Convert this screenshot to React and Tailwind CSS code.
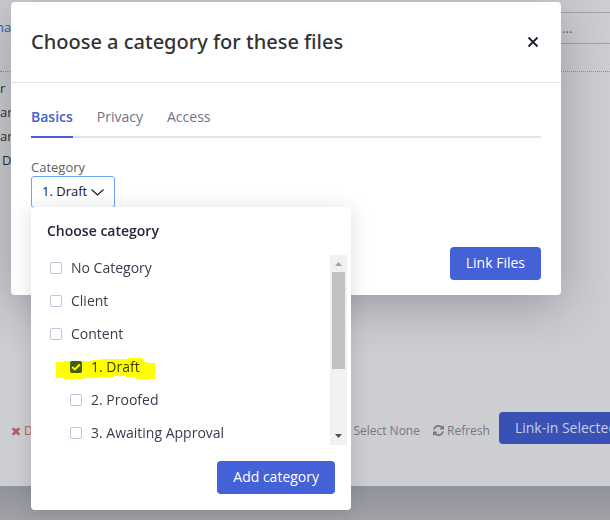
import React, { useState } from "react";

const categories = [
  { id: "none", name: "No Category", nested: false },
  { id: "client", name: "Client", nested: false },
  { id: "content", name: "Content", nested: false },
  { id: "draft", name: "1. Draft", nested: true, marked: true },
  { id: "proofed", name: "2. Proofed", nested: true },
  { id: "approval", name: "3. Awaiting Approval", nested: true },
];

const tabs = ["Basics", "Privacy", "Access"];

const TimesIcon = () => (
  <svg className="h-3 w-3" viewBox="0 0 1792 1792" fill="currentColor" aria-hidden="true">
    <path d="M1490 1322q0 40-28 68l-136 136q-28 28-68 28t-68-28l-294-294-294 294q-28 28-68 28t-68-28l-136-136q-28-28-28-68t28-68l294-294-294-294q-28-28-28-68t28-68l136-136q28-28 68-28t68 28l294 294 294-294q28-28 68-28t68 28l136 136q28 28 28 68t-28 68l-294 294 294 294q28 28 28 68z" />
  </svg>
);

const RefreshIcon = () => (
  <svg className="h-[11px] w-[11px]" viewBox="0 0 1536 1536" fill="currentColor" aria-hidden="true">
    <path d="M1511 928q0 5-1 7-64 268-268 434.5t-478 166.5q-146 0-282.5-55t-243.5-157l-129 129q-19 19-45 19t-45-19-19-45v-448q0-26 19-45t45-19h448q26 0 45 19t19 45-19 45l-137 137q71 66 161 102t187 36q134 0 250-65t186-179q11-17 53-117 8-23 30-23h192q13 0 22.5 9.5t9.5 22.5zm25-800v448q0 26-19 45t-45 19h-448q-26 0-45-19t-19-45 19-45l138-138q-148-137-349-137-134 0-250 65t-186 179q-11 17-53 117-8 23-30 23h-199q-13 0-22.5-9.5t-9.5-22.5v-7q65-268 270-434.5t480-166.5q146 0 284 55.5t245 156.5l130-129q19-19 45-19t45 19 19 45z" />
  </svg>
);

// Felt pen stroke over a row
const Marker = () => (
  <svg
    className="absolute left-[9px] top-1 h-[22px] w-[100px] mix-blend-multiply"
    viewBox="0 0 100 22"
    fill="#ffff00"
    aria-hidden="true"
  >
    <path d="M0 4H8V3H36V2H45V1H72V0H86V1H88V4H92V5H99V21H80V19H70V18H58V19H45V20H28V21H7V20H0Z" />
  </svg>
);

const CategoryRow = ({ category, checked, onToggle }) => (
  <li className="relative">
    <label
      className={`flex h-[25px] items-center gap-[9px] text-sm text-[#3a3b4c] ${
        category.nested ? "pl-[23px]" : "pl-[3px]"
      }`}
    >
      <span className="grid">
        <input
          type="checkbox"
          checked={checked}
          onChange={onToggle}
          className="col-start-1 row-start-1 h-3 w-3 appearance-none rounded-[2px] border border-[#bfc3dc] bg-white checked:border-[#4461d7] checked:bg-[#4461d7]"
        />
        {checked && (
          <svg
            className="pointer-events-none col-start-1 row-start-1 h-3 w-3"
            viewBox="0 0 12 12"
            fill="none"
            stroke="#ffffff"
            strokeWidth="2"
            aria-hidden="true"
          >
            <path d="M2.3 6L4.8 8.4L9.8 3.5" />
          </svg>
        )}
      </span>
      {category.name}
    </label>
    {category.marked && <Marker />}
  </li>
);

const ScrollBar = () => (
  <div className="flex w-[17px] flex-col items-center bg-[#f1f1f1]" aria-hidden="true">
    <svg className="h-[17px] w-[17px]" viewBox="0 0 17 17" fill="#a3a3a3">
      <path d="M5 11L8.5 7L12 11Z" />
    </svg>
    <div className="h-[97px] w-[13px] bg-[#c1c1c1]" />
    <svg className="mt-auto h-[17px] w-[17px]" viewBox="0 0 17 17" fill="#505050">
      <path d="M5 6L8.5 10L12 6Z" />
    </svg>
  </div>
);

const CategoryMenu = ({ selected, onSelect }) => (
  <div className="absolute left-0 top-[31px] z-20 w-80 rounded bg-white pb-4 pl-4 pt-3 shadow-[0_3px_20px_rgba(30,35,50,0.16)]">
    <h3 className="text-sm font-semibold leading-6 text-[#25273a]">Choose category</h3>
    <div className="mr-1 mt-3 flex">
      <ul className="flex flex-1 flex-col gap-2">
        {categories.map((category) => (
          <CategoryRow
            key={category.id}
            category={category}
            checked={selected === category.id}
            onToggle={() => onSelect(category.id)}
          />
        ))}
      </ul>
      <ScrollBar />
    </div>
    <div className="mr-4 mt-4 flex justify-end">
      <button
        type="button"
        className="h-[33px] rounded bg-[#4461d7] px-4 pb-[2px] text-sm font-medium text-white"
      >
        Add category
      </button>
    </div>
  </div>
);

const FilesPage = () => (
  <div className="flex min-h-screen flex-col bg-[#cdced2] text-[13px] text-[#2d2e33]">
    <div className="flex items-center border-b border-dotted border-[#909196] pb-[27px] pt-3">
      <a href="#files" className="-ml-1 text-[#1e64a5]">
        na
      </a>
      <input
        type="text"
        aria-label="Search"
        placeholder="..."
        className="-mr-1 h-8 min-w-0 flex-1 border border-[#a0a1a5] pl-[550px] placeholder:text-[#66676c]"
      />
    </div>
    <ul className="pt-1 leading-6">
      <li>r</li>
      <li>ar</li>
      <li>ar</li>
      <li className="pl-[2px]">D</li>
    </ul>
    <div className="mt-auto flex items-center pb-[42px] pl-[10px] text-xs text-[#77787c]">
      <button type="button" className="flex items-center gap-[2px] pt-[5px] text-[#b85a5c]">
        <TimesIcon />D
      </button>
      <div className="-mr-[23px] ml-auto flex items-center whitespace-nowrap">
        <button type="button" className="pt-[5px]">
          Select None
        </button>
        <button type="button" className="ml-[13px] flex items-center gap-[3px] pt-[5px]">
          <RefreshIcon />
          Refresh
        </button>
        <button
          type="button"
          className="ml-[9px] h-8 rounded bg-[#3950b5] px-4 text-sm font-medium text-[#c9cde0]"
        >
          Link-in Selected
        </button>
      </div>
    </div>
    <footer className="h-[34px] bg-linear-to-b from-[#90939a] to-[#a2a1a7]" />
  </div>
);

export default function App() {
  const [tab, setTab] = useState("Basics");
  const [open, setOpen] = useState(true);
  const [selected, setSelected] = useState("draft");

  const current = categories.find((c) => c.id === selected);

  return (
    <div className="relative overflow-hidden font-['Open_Sans',sans-serif]">
      <FilesPage />

      <div className="absolute inset-0 pl-[11px] pr-[49px] pt-[2px]">
        <section
          role="dialog"
          aria-labelledby="dialog-title"
          className="rounded bg-white shadow-[0_10px_50px_rgba(30,30,45,0.3)]"
        >
          <header className="flex h-[81px] items-center justify-between border-b border-[#dde3ec] pl-5 pr-[22px]">
            <h2
              id="dialog-title"
              className="font-['Noto_Sans',sans-serif] text-xl font-medium text-[#333333]"
            >
              Choose a category for these files
            </h2>
            <button type="button" aria-label="Close">
              <svg
                className="h-3 w-3"
                viewBox="0 0 12 12"
                fill="none"
                stroke="#1c1d2e"
                strokeWidth="1.8"
              >
                <path d="M1.5 1.5L10.5 10.5M10.5 1.5L1.5 10.5" />
              </svg>
            </button>
          </header>

          <div className="px-5 pb-[15px] pt-6">
            <nav className="flex gap-6 border-b-2 border-[#e1e4f1]">
              {tabs.map((name) => (
                <button
                  key={name}
                  type="button"
                  onClick={() => setTab(name)}
                  className={`-mb-[2px] border-b-2 pb-[9px] text-sm leading-5 ${
                    tab === name
                      ? "border-[#4461d7] font-semibold text-[#4461d7]"
                      : "border-transparent text-[#6e7588]"
                  }`}
                >
                  {name}
                </button>
              ))}
            </nav>

            <div className="relative mt-5">
              <p id="category-label" className="text-[13px] leading-[18px] text-[#606060]">
                Category
              </p>
              <div className="relative">
                <button
                  type="button"
                  aria-labelledby="category-label"
                  onClick={() => setOpen(!open)}
                  className="flex h-8 items-center gap-1 rounded-[3px] border border-[#66a8f0] px-[10px] text-[13px] text-[#16172b]"
                >
                  {current.name}
                  <svg
                    className="h-3 w-[13px]"
                    viewBox="0 0 13 12"
                    fill="none"
                    stroke="currentColor"
                    strokeWidth="1.1"
                    aria-hidden="true"
                  >
                    <path d="M0.5 3.5L6.5 9L12.5 3.5" />
                  </svg>
                </button>
                {open && <CategoryMenu selected={selected} onSelect={setSelected} />}
              </div>
            </div>

            <div className="mt-[39px] flex justify-end">
              <button
                type="button"
                className="h-[33px] rounded bg-[#4461d7] px-4 pb-[2px] text-sm font-medium text-white"
              >
                Link Files
              </button>
            </div>
          </div>
        </section>
      </div>
    </div>
  );
}
